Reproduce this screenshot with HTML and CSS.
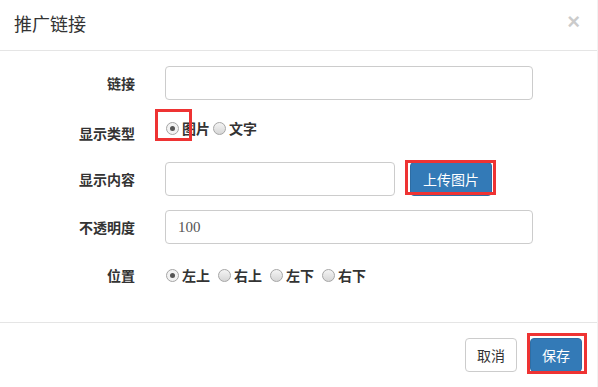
FILE: index.html
```html
<!DOCTYPE html>
<html lang="zh-CN">
<head>
    <meta charset="UTF-8">
    <meta name="viewport" content="width=device-width, initial-scale=1.0">
    <title>推广链接</title>
    <link rel="stylesheet" href="styles.css">
</head>
<body>
    <div class="modal-content">
        <div class="modal-header">
            <h4 class="modal-title">推广链接</h4>
            <span class="close">&times;</span>
        </div>

        <div class="modal-body">
            <div class="form-row">
                <label class="form-label">链接</label>
                <input class="form-control wide" type="text">
            </div>
            <div class="form-row radio-row type-row">
                <label class="form-label">显示类型</label>
                <div class="radios">
                    <label class="radio-inline mark-wrap"><span class="radio checked"></span>图片<span class="mark mark-radio"></span></label>
                    <label class="radio-inline"><span class="radio"></span>文字</label>
                </div>
            </div>
            <div class="form-row">
                <label class="form-label">显示内容</label>
                <input class="form-control short" type="text">
                <div class="mark-wrap">
                    <button class="btn btn-primary upload">上传图片</button>
                    <span class="mark mark-upload"></span>
                </div>
            </div>
            <div class="form-row">
                <label class="form-label">不透明度</label>
                <input class="form-control wide digits" type="text" value="100">
            </div>
            <div class="form-row radio-row pos-row">
                <label class="form-label">位置</label>
                <div class="radios">
                    <label class="radio-inline"><span class="radio checked"></span>左上</label>
                    <label class="radio-inline"><span class="radio"></span>右上</label>
                    <label class="radio-inline"><span class="radio"></span>左下</label>
                    <label class="radio-inline"><span class="radio"></span>右下</label>
                </div>
            </div>
        </div>

        <div class="modal-footer">
            <button class="btn btn-default">取消</button>
            <div class="mark-wrap">
                <button class="btn btn-primary">保存</button>
                <span class="mark mark-save"></span>
            </div>
        </div>
    </div>
</body>
</html>
```

FILE: styles.css
```css
body {
    margin: 0;
    padding: 0;
    background-color: #fff;
    color: #333;
    font-family: "Noto Sans CJK SC", "Liberation Sans", sans-serif;
    font-size: 14px;
}
.modal-content {
    width: 598px;
    height: 387px;
    box-sizing: border-box;
    border-right: 1px solid #f2f2f2;
}
.modal-header {
    height: 51px;
    box-sizing: border-box;
    padding: 0 15px 0 14px;
    border-bottom: 1px solid #e5e5e5;
    display: flex;
    align-items: center;
    justify-content: space-between;
}
.modal-title {
    margin: 0;
    font-size: 18px;
    font-weight: normal;
    line-height: 1;
    padding-bottom: 5px;
}
.close {
    font-family: "Liberation Sans", sans-serif;
    font-size: 22px;
    font-weight: bold;
    color: #000;
    opacity: 0.2;
    line-height: 1;
    margin-right: 2px;
    padding-bottom: 6px;
}
.modal-body {
    height: 271px;
    box-sizing: border-box;
    padding-top: 15px;
}
.form-row {
    display: flex;
    align-items: center;
    height: 34px;
    margin-bottom: 14px;
}
.form-row:nth-child(4) {
    margin-top: 1px;
}
.form-label {
    width: 135px;
    padding-right: 30px;
    text-align: right;
    font-weight: bold;
    line-height: 20px;
    flex-shrink: 0;
}
.type-row .form-label {
    padding-top: 4px;
}
.form-control {
    height: 34px;
    box-sizing: border-box;
    padding: 6px 12px;
    border: 1px solid #ccc;
    border-radius: 4px;
    font-size: 14px;
    color: #555;
    margin: 0;
    outline: none;
}
.wide {
    width: 368px;
}
.short {
    width: 230px;
    margin-right: 15px;
}
.digits {
    font-family: "Liberation Serif", serif;
    font-size: 15px;
}
.radios {
    display: flex;
    align-items: center;
    gap: 3px;
    padding-left: 1px;
}
.pos-row .radios {
    gap: 8px;
}
.type-row .radios {
    margin-top: -6px;
}
.radio-inline {
    display: flex;
    align-items: center;
    font-weight: bold;
    line-height: 20px;
}
.radio {
    width: 11px;
    height: 11px;
    border: 1px solid #a6a6a6;
    border-radius: 50%;
    background: linear-gradient(#f4f4f4, #d6d6d6);
    margin-right: 3px;
    position: relative;
}
.radio.checked {
    background: #f2f2f2;
}
.radio.checked::after {
    content: "";
    position: absolute;
    left: 3px;
    top: 3px;
    width: 5px;
    height: 5px;
    border-radius: 50%;
    background: #555;
}
.btn {
    height: 34px;
    box-sizing: border-box;
    padding: 6px 11px;
    font-family: inherit;
    font-size: 14px;
    line-height: 20px;
    border: 1px solid transparent;
    border-radius: 4px;
    cursor: pointer;
}
.upload {
    padding: 6px 12px;
}
.btn-primary {
    background-color: #337ab7;
    border-color: #2e6da4;
    color: #fff;
}
.btn-default {
    background-color: #fff;
    border-color: #ccc;
    color: #333;
}
.modal-footer {
    height: 65px;
    box-sizing: border-box;
    border-top: 1px solid #e5e5e5;
    padding: 15px 15px 0;
    display: flex;
    justify-content: flex-end;
    gap: 13px;
}
.mark-wrap {
    position: relative;
}
.mark {
    position: absolute;
    border: 3px solid #ee3333;
    pointer-events: none;
}
.mark-radio {
    left: -11px;
    top: -9px;
    width: 31px;
    height: 26px;
}
.mark-upload {
    left: -5px;
    top: -2px;
    width: 85px;
    height: 29px;
}
.mark-save {
    left: -3px;
    top: -5px;
    width: 54px;
    height: 35px;
}
```
